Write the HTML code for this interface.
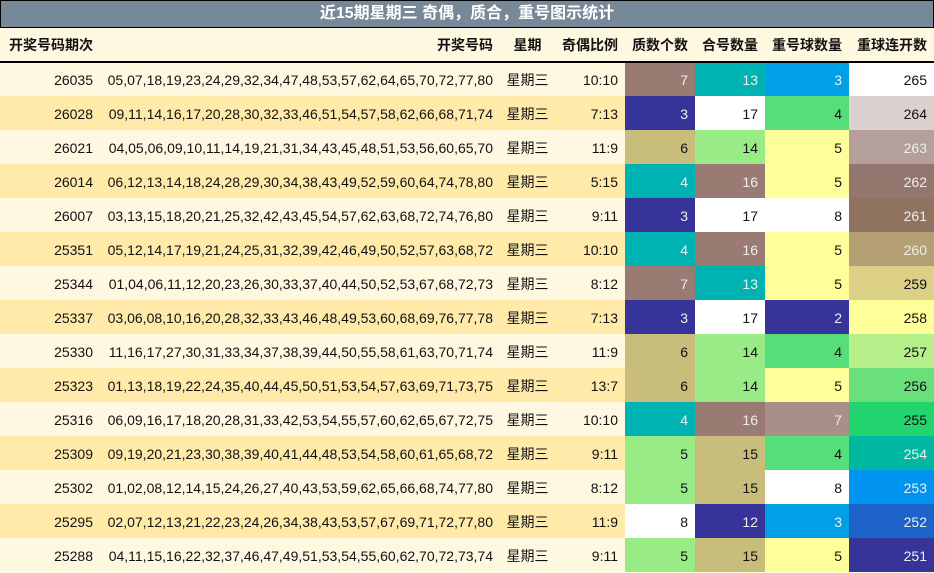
<!DOCTYPE html>
<html><head><meta charset="utf-8"><style>
*{margin:0;padding:0;box-sizing:border-box}
body{width:934px;height:573px;background:#fff8e1;font-family:"Liberation Sans","Noto Sans CJK SC",sans-serif;font-size:14px;color:#111;overflow:hidden}
.title{height:28px;background:#778899;border:1px solid #000;color:#fff;font-weight:bold;font-size:16px;text-align:center;line-height:26px}
table{border-collapse:collapse;table-layout:fixed;width:934px}
td,th{height:34px;padding:0;white-space:nowrap;text-align:right}
th{height:34px;font-weight:bold;border-bottom:2px solid #000;padding-right:7px;background:#fff8e1;padding-top:1px}
td{padding-right:7px;padding-top:1px}
tr.a td{background:#fff8e1}
tr.b td{background:#ffeaaa}
td.c{text-align:center;padding:1px 0 0 0}
.l{color:#eee}
</style></head><body>
<div class="title">近15期星期三 奇偶，质合，重号图示统计</div>
<table>
<colgroup><col style="width:100px"><col style="width:400px"><col style="width:55px"><col style="width:70px"><col style="width:70px"><col style="width:70px"><col style="width:84px"><col style="width:85px"></colgroup>
<tr><th>开奖号码期次</th><th>开奖号码</th><th style="text-align:center;padding:1px 0 0 0">星期</th><th>奇偶比例</th><th>质数个数</th><th>合号数量</th><th>重号球数量</th><th>重球连开数</th></tr>
<tr class="a"><td>26035</td><td>05,07,18,19,23,24,29,32,34,47,48,53,57,62,64,65,70,72,77,80</td><td class="c">星期三</td><td>10:10</td><td class="l" style="background:#9a7b74">7</td><td class="l" style="background:#00b3b3">13</td><td class="l" style="background:#00a0e6">3</td><td style="background:#fff">265</td></tr>
<tr class="b"><td>26028</td><td>09,11,14,16,17,20,28,30,32,33,46,51,54,57,58,62,66,68,71,74</td><td class="c">星期三</td><td>7:13</td><td class="l" style="background:#363399">3</td><td style="background:#fff">17</td><td style="background:#55de7a">4</td><td style="background:#dbd2cf">264</td></tr>
<tr class="a"><td>26021</td><td>04,05,06,09,10,11,14,19,21,31,34,43,45,48,51,53,56,60,65,70</td><td class="c">星期三</td><td>11:9</td><td style="background:#c9bd7c">6</td><td style="background:#99eb86">14</td><td style="background:#ffff99">5</td><td class="l" style="background:#b59f9a">263</td></tr>
<tr class="b"><td>26014</td><td>06,12,13,14,18,24,28,29,30,34,38,43,49,52,59,60,64,74,78,80</td><td class="c">星期三</td><td>5:15</td><td class="l" style="background:#00b3b3">4</td><td class="l" style="background:#9a7b74">16</td><td style="background:#ffff99">5</td><td class="l" style="background:#93766e">262</td></tr>
<tr class="a"><td>26007</td><td>03,13,15,18,20,21,25,32,42,43,45,54,57,62,63,68,72,74,76,80</td><td class="c">星期三</td><td>9:11</td><td class="l" style="background:#363399">3</td><td style="background:#fff">17</td><td style="background:#fff">8</td><td class="l" style="background:#8f735f">261</td></tr>
<tr class="b"><td>25351</td><td>05,12,14,17,19,21,24,25,31,32,39,42,46,49,50,52,57,63,68,72</td><td class="c">星期三</td><td>10:10</td><td class="l" style="background:#00b3b3">4</td><td class="l" style="background:#9a7b74">16</td><td style="background:#ffff99">5</td><td class="l" style="background:#b5a073">260</td></tr>
<tr class="a"><td>25344</td><td>01,04,06,11,12,20,23,26,30,33,37,40,44,50,52,53,67,68,72,73</td><td class="c">星期三</td><td>8:12</td><td class="l" style="background:#9a7b74">7</td><td class="l" style="background:#00b3b3">13</td><td style="background:#ffff99">5</td><td style="background:#dbd086">259</td></tr>
<tr class="b"><td>25337</td><td>03,06,08,10,16,20,28,32,33,43,46,48,49,53,60,68,69,76,77,78</td><td class="c">星期三</td><td>7:13</td><td class="l" style="background:#363399">3</td><td style="background:#fff">17</td><td class="l" style="background:#363399">2</td><td style="background:#ffff99">258</td></tr>
<tr class="a"><td>25330</td><td>11,16,17,27,30,31,33,34,37,38,39,44,50,55,58,61,63,70,71,74</td><td class="c">星期三</td><td>11:9</td><td style="background:#c9bd7c">6</td><td style="background:#99eb86">14</td><td style="background:#55de7a">4</td><td style="background:#b6f08a">257</td></tr>
<tr class="b"><td>25323</td><td>01,13,18,19,22,24,35,40,44,45,50,51,53,54,57,63,69,71,73,75</td><td class="c">星期三</td><td>13:7</td><td style="background:#c9bd7c">6</td><td style="background:#99eb86">14</td><td style="background:#ffff99">5</td><td style="background:#6ae07a">256</td></tr>
<tr class="a"><td>25316</td><td>06,09,16,17,18,20,28,31,33,42,53,54,55,57,60,62,65,67,72,75</td><td class="c">星期三</td><td>10:10</td><td class="l" style="background:#00b3b3">4</td><td class="l" style="background:#9a7b74">16</td><td class="l" style="background:#a89088">7</td><td style="background:#22d46e">255</td></tr>
<tr class="b"><td>25309</td><td>09,19,20,21,23,30,38,39,40,41,44,48,53,54,58,60,61,65,68,72</td><td class="c">星期三</td><td>9:11</td><td style="background:#99eb86">5</td><td style="background:#c9bd7c">15</td><td style="background:#55de7a">4</td><td class="l" style="background:#00b8a0">254</td></tr>
<tr class="a"><td>25302</td><td>01,02,08,12,14,15,24,26,27,40,43,53,59,62,65,66,68,74,77,80</td><td class="c">星期三</td><td>8:12</td><td style="background:#99eb86">5</td><td style="background:#c9bd7c">15</td><td style="background:#fff">8</td><td class="l" style="background:#0094f0">253</td></tr>
<tr class="b"><td>25295</td><td>02,07,12,13,21,22,23,24,26,34,38,43,53,57,67,69,71,72,77,80</td><td class="c">星期三</td><td>11:9</td><td style="background:#fff">8</td><td class="l" style="background:#363399">12</td><td class="l" style="background:#00a0e6">3</td><td class="l" style="background:#1c62c8">252</td></tr>
<tr class="a"><td>25288</td><td>04,11,15,16,22,32,37,46,47,49,51,53,54,55,60,62,70,72,73,74</td><td class="c">星期三</td><td>9:11</td><td style="background:#99eb86">5</td><td style="background:#c9bd7c">15</td><td style="background:#ffff99">5</td><td class="l" style="background:#363399">251</td></tr>
</table>
</body></html>
